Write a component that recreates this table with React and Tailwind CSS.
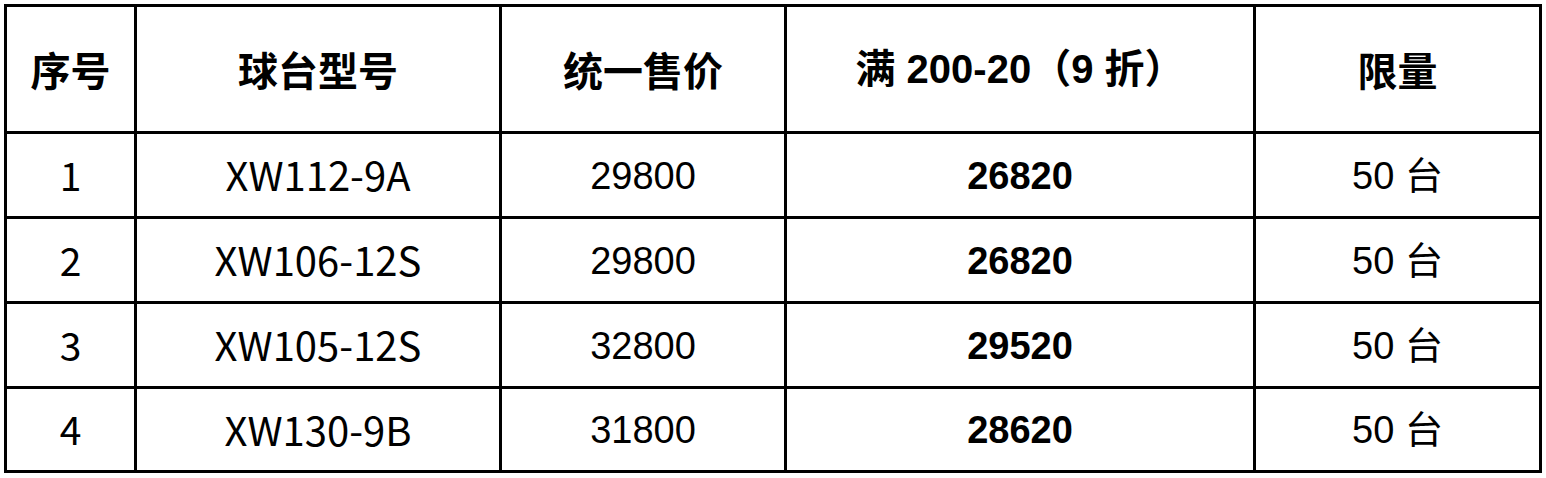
const rows = [
  { no: '1', model: 'XW112-9A', price: '29800', sale: '26820', limit: '50 台' },
  { no: '2', model: 'XW106-12S', price: '29800', sale: '26820', limit: '50 台' },
  { no: '3', model: 'XW105-12S', price: '32800', sale: '29520', limit: '50 台' },
  { no: '4', model: 'XW130-9B', price: '31800', sale: '28620', limit: '50 台' },
];

const cjk = "font-['Noto_Sans_CJK_SC',sans-serif]";
const arial = "font-['Liberation_Sans','Noto_Sans_CJK_SC',sans-serif]";

export default function App() {
  return (
    <div className="min-h-screen bg-white p-[4px]">
      <div className="grid w-[1538px] grid-cols-[127px_362px_282px_466px_283px] grid-rows-[124px_82px_82px_82px_81px] gap-[3px] bg-black p-[3px] text-black">
        <div className={`flex items-center justify-center bg-white text-[40px] font-bold ${cjk}`}>序号</div>
        <div className={`flex items-center justify-center bg-white text-[40px] font-bold ${cjk}`}>球台型号</div>
        <div className={`flex items-center justify-center bg-white text-[40px] font-bold ${cjk}`}>统一售价</div>
        <div className={`flex items-center justify-center bg-white text-[40px] font-bold ${arial}`}>满 200-20（9 折）</div>
        <div className={`flex items-center justify-center bg-white text-[40px] font-bold ${cjk}`}>限量</div>
        {rows.map((r) => (
          <div key={r.no} className="contents">
            <div className={`flex items-center justify-center bg-white pb-[2px] text-[39px] ${cjk}`}>{r.no}</div>
            <div className={`flex items-center justify-center bg-white pb-[2px] text-[40px] ${cjk}`}>{r.model}</div>
            <div className={`flex items-center justify-center bg-white pt-[2px] text-[38px] ${arial}`}>{r.price}</div>
            <div className={`flex items-center justify-center bg-white pt-[2px] text-[38px] font-bold ${arial}`}>{r.sale}</div>
            <div className={`flex items-center justify-center bg-white pt-[2px] text-[38px] ${arial}`}>{r.limit}</div>
          </div>
        ))}
      </div>
    </div>
  );
}
